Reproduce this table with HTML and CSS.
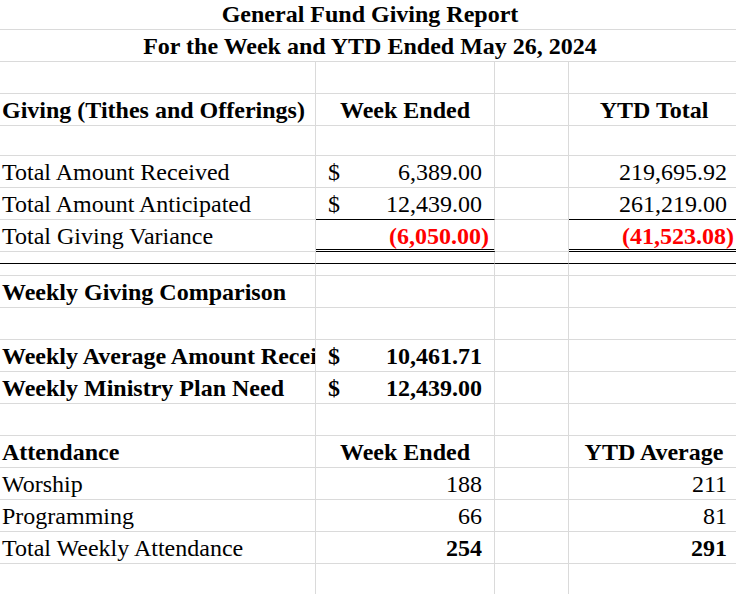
FILE: index.html
```html
<!DOCTYPE html>
<html lang="en">
<head>
<meta charset="utf-8">
<title>General Fund Giving Report</title>
<link rel="stylesheet" href="styles.css">
</head>
<body>
<div class="sheet">
  <div class="row h30"><div class="cell span b center">General Fund Giving Report</div></div>
  <div class="row"><div class="cell span b center">For the Week and YTD Ended May 26, 2024</div></div>
  <div class="row"><div class="cell"></div><div class="cell"></div><div class="cell"></div><div class="cell"></div></div>
  <div class="row">
    <div class="cell b">Giving (Tithes and Offerings)</div>
    <div class="cell b center">Week Ended</div>
    <div class="cell"></div>
    <div class="cell b center">YTD Total</div>
  </div>
  <div class="row h30"><div class="cell"></div><div class="cell"></div><div class="cell"></div><div class="cell"></div></div>
  <div class="row">
    <div class="cell">Total Amount Received</div>
    <div class="cell acct"><span>$</span><span>6,389.00</span></div>
    <div class="cell"></div>
    <div class="cell num">219,695.92</div>
  </div>
  <div class="row">
    <div class="cell">Total Amount Anticipated</div>
    <div class="cell acct under"><span>$</span><span>12,439.00</span></div>
    <div class="cell"></div>
    <div class="cell num under">261,219.00</div>
  </div>
  <div class="row">
    <div class="cell">Total Giving Variance</div>
    <div class="cell num neg dbl">(6,050.00)</div>
    <div class="cell"></div>
    <div class="cell num neg dbl">(41,523.08)</div>
  </div>
  <div class="row h12 rule"><div class="cell"></div><div class="cell"></div><div class="cell"></div><div class="cell"></div></div>
  <div class="row h12"><div class="cell"></div><div class="cell"></div><div class="cell"></div><div class="cell"></div></div>
  <div class="row">
    <div class="cell b">Weekly Giving Comparison</div>
    <div class="cell"></div><div class="cell"></div><div class="cell"></div>
  </div>
  <div class="row"><div class="cell"></div><div class="cell"></div><div class="cell"></div><div class="cell"></div></div>
  <div class="row">
    <div class="cell b">Weekly Average Amount Received</div>
    <div class="cell acct b"><span>$</span><span>10,461.71</span></div>
    <div class="cell"></div><div class="cell"></div>
  </div>
  <div class="row">
    <div class="cell b">Weekly Ministry Plan Need</div>
    <div class="cell acct b"><span>$</span><span>12,439.00</span></div>
    <div class="cell"></div><div class="cell"></div>
  </div>
  <div class="row"><div class="cell"></div><div class="cell"></div><div class="cell"></div><div class="cell"></div></div>
  <div class="row">
    <div class="cell b">Attendance</div>
    <div class="cell b center">Week Ended</div>
    <div class="cell"></div>
    <div class="cell b center">YTD Average</div>
  </div>
  <div class="row">
    <div class="cell">Worship</div>
    <div class="cell num">188</div>
    <div class="cell"></div>
    <div class="cell num">211</div>
  </div>
  <div class="row">
    <div class="cell">Programming</div>
    <div class="cell num">66</div>
    <div class="cell"></div>
    <div class="cell num">81</div>
  </div>
  <div class="row">
    <div class="cell">Total Weekly Attendance</div>
    <div class="cell num b">254</div>
    <div class="cell"></div>
    <div class="cell num b">291</div>
  </div>
  <div class="row"><div class="cell"></div><div class="cell"></div><div class="cell"></div><div class="cell"></div></div>
</div>
</body>
</html>
```

FILE: styles.css
```css
html, body {
  margin: 0;
  padding: 0;
  background: #ffffff;
  overflow: hidden;
}

.sheet {
  width: 740px;
  display: flex;
  flex-direction: column;
  font-family: "Liberation Serif", "Times New Roman", serif;
  font-size: 24px;
  line-height: 24px;
  color: #000000;
}

.row {
  display: grid;
  grid-template-columns: 316px 179px 74px 171px;
  height: 32px;
}

.row.h30 { height: 30px; }
.row.h12 { height: 12px; }

.cell {
  box-sizing: border-box;
  height: 100%;
  border-right: 1px solid #dadada;
  border-bottom: 1px solid #dadada;
  display: flex;
  align-items: flex-end;
  padding: 0 2px 3px 2px;
  white-space: nowrap;
  overflow: hidden;
}

.cell.span {
  grid-column: 1 / 5;
  border-right: none;
}

.b { font-weight: bold; }

.center { justify-content: center; }

.num {
  justify-content: flex-end;
  padding-right: 12px;
}

.acct {
  justify-content: space-between;
  padding-left: 12px;
  padding-right: 12px;
}

.neg {
  color: #ff0000;
  font-weight: bold;
  padding-right: 5px;
}

.under { border-bottom-color: #000000; }

.dbl {
  border-bottom: 3px double #000000;
  padding-bottom: 1px;
}

.rule .cell { border-bottom-color: #000000; }
```
